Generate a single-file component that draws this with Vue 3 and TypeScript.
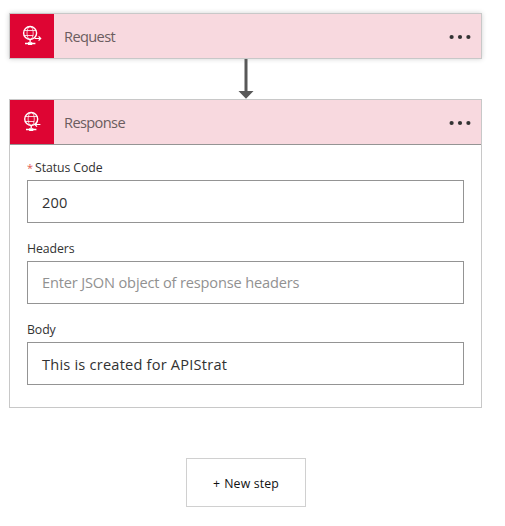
<script setup lang="ts">
interface Field {
  id: string
  label: string
  required?: boolean
  value: string
  placeholder?: string
}

const fields: Field[] = [
  { id: 'status', label: 'Status Code', required: true, value: '200' },
  { id: 'headers', label: 'Headers', value: '', placeholder: 'Enter JSON object of response headers' },
  { id: 'body', label: 'Body', value: 'This is created for APIStrat' },
]
</script>

<template>
  <main class="designer">
    <section class="card card-request">
      <header class="card-header">
        <span class="icon-box">
          <svg class="icon" viewBox="0 0 44 44" aria-hidden="true">
            <g fill="none" stroke="#fff">
              <circle cx="20.1" cy="19" r="6.5" stroke-width="1.4" />
              <ellipse cx="20.1" cy="19" rx="3.1" ry="6.5" stroke-width=".7" />
              <path d="M13.8 16.5h12.6M13.8 21.5h9.5" stroke-width=".8" />
              <path d="M20.1 25v3M15 29.5h10.4" stroke-width="1.3" />
              <path d="M24.6 24.5h6M28.6 22.4l2.1 2.1-2.1 2.1" stroke-width="1.2" />
            </g>
            <path d="M18 28.2h4.2v2.8H18z" fill="#fff" />
          </svg>
        </span>
        <h2 class="title">Request</h2>
        <button class="menu" aria-label="Menu">
          <svg viewBox="0 0 22 6"><g fill="#333"><circle cx="2.6" cy="3" r="2.1" /><circle cx="11" cy="3" r="2.1" /><circle cx="19.4" cy="3" r="2.1" /></g></svg>
        </button>
      </header>
    </section>

    <svg class="arrow" viewBox="0 0 16 40" aria-hidden="true">
      <path d="M6.5 0h3v32h6L8 39.7.5 32h6z" fill="#585858" />
    </svg>

    <section class="card">
      <header class="card-header divided">
        <span class="icon-box">
          <svg class="icon" viewBox="0 0 44 44" aria-hidden="true">
            <g fill="none" stroke="#fff">
              <circle cx="21.2" cy="19" r="6.5" stroke-width="1.4" />
              <ellipse cx="21.2" cy="19" rx="3.1" ry="6.5" stroke-width=".7" />
              <path d="M14.9 16.5h12.6M14.9 21.5h9.3" stroke-width=".8" />
              <path d="M21.2 25v3M16 29.5h10.4" stroke-width="1.3" />
              <path d="M24.8 24.5h5.6M27 22.4l-2.1 2.1 2.1 2.1" stroke-width="1.2" />
            </g>
            <path d="M19.1 28.2h4.2v2.8h-4.2z" fill="#fff" />
          </svg>
        </span>
        <h2 class="title">Response</h2>
        <button class="menu" aria-label="Menu">
          <svg viewBox="0 0 22 6"><g fill="#333"><circle cx="2.6" cy="3" r="2.1" /><circle cx="11" cy="3" r="2.1" /><circle cx="19.4" cy="3" r="2.1" /></g></svg>
        </button>
      </header>
      <div class="fields">
        <div v-for="f in fields" :key="f.id" class="field">
          <label class="label"><span v-if="f.required" class="star">*</span>{{ f.label }}</label>
          <div class="input">
            <span v-if="f.value" class="value">{{ f.value }}</span>
            <span v-else class="placeholder">{{ f.placeholder }}</span>
          </div>
        </div>
      </div>
    </section>

    <button class="new-step"><span>+</span><span>New step</span></button>
  </main>
</template>

<style>
body {
  background: #fff;
}
</style>

<style scoped>
.designer {
  box-sizing: border-box;
  width: 505px;
  height: 526px;
  padding: 13px 0 0 9px;
  display: flex;
  flex-direction: column;
  align-items: flex-start;
  overflow: hidden;
  font-family: "Open Sans", "Noto Sans", sans-serif;
  color: #323232;
  white-space: nowrap;
}
.card {
  box-sizing: border-box;
  width: 473px;
  border: 1px solid #c8c8c8;
  background: #fff;
}
.card-request {
  box-shadow: 0 0 5px rgba(0, 0, 0, 0.18);
}
.card-header {
  height: 44px;
  display: flex;
  align-items: center;
  background: #f8d9df;
}
.divided {
  border-bottom: 1px solid #949494;
}
.icon-box,
.icon {
  display: block;
  width: 44px;
  height: 44px;
}
.icon-box {
  background: #de0533;
}
.title {
  margin: 0 auto 0 10px;
  font-size: 14.6px;
  line-height: 20px;
  font-weight: 400;
  letter-spacing: -0.62px;
  color: #6b5d60;
}
.menu {
  border: 0;
  padding: 0;
  margin: 2px 10px 0 0;
  background: none;
}
.menu svg {
  display: block;
  width: 22px;
  height: 6px;
}
.arrow {
  display: block;
  width: 16px;
  height: 40px;
  margin-left: 229px;
}
.fields {
  display: flex;
  flex-direction: column;
  gap: 17px;
  padding: 14px 17px 22px;
}
.field {
  display: flex;
  flex-direction: column;
  gap: 3px;
}
.label {
  height: 18px;
  line-height: 18px;
  font-size: 12.3px;
  letter-spacing: -0.08px;
}
.star {
  color: #e0584f;
  font-size: 11px;
  margin-right: 2px;
}
.input {
  box-sizing: border-box;
  height: 43px;
  border: 1px solid #949494;
  padding: 0 14px;
  font-size: 14.6px;
  line-height: 42px;
}
.value {
  letter-spacing: 0.21px;
}
.placeholder {
  display: block;
  line-height: 40px;
  letter-spacing: -0.16px;
  color: #919191;
}
.new-step {
  box-sizing: border-box;
  width: 120px;
  height: 49px;
  margin: 50px 0 0 177px;
  border: 1px solid #d0d0d0;
  background: #fff;
  padding: 2px 0 0;
  display: flex;
  align-items: center;
  justify-content: center;
  gap: 4px;
  font-family: inherit;
  font-size: 12.3px;
  letter-spacing: 0.15px;
  color: #111;
}
</style>
